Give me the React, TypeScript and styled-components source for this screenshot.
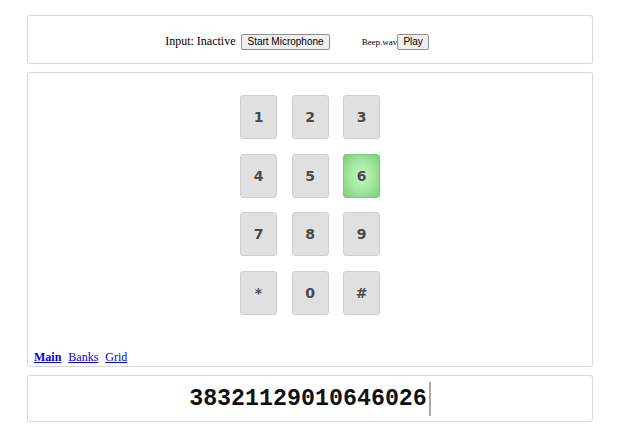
import React from "react";
import styled, { createGlobalStyle } from "styled-components";

const Global = createGlobalStyle`
  html, body { margin: 0; padding: 0; background: #fff; }
  body { font-family: "Liberation Serif", "Times New Roman", serif; }
`;

const Page = styled.div`
  padding: 15px 0 0 27px;
  width: 566px;
  display: flex;
  flex-direction: column;
  gap: 8px;
`;

const Panel = styled.div<{ $h: number }>`
  box-sizing: border-box;
  height: ${(p) => p.$h}px;
  border: 1px solid #d9d9d9;
  border-radius: 3px;
  box-shadow: 0 0 1px rgba(0,0,0,0.08);
  background: #fff;
`;

const TopBar = styled(Panel)`
  display: flex;
  align-items: center;
  justify-content: center;
  padding-right: 26px;
  padding-top: 4px;
`;

const Label = styled.span`
  font-size: 12px;
  color: #000;
  margin-right: 6px;
`;

const SmallLabel = styled.span`
  font-size: 9px;
  color: #000;
  margin-left: 32px;
`;

const NativeBtn = styled.button`
  font-family: "Liberation Sans", Arial, sans-serif;
  font-size: 10px;
  height: 16px;
  padding: 0 5px;
  border: 1px solid #8f8f8f;
  border-radius: 2px;
  background: #efefef;
  color: #000;
  line-height: 12px;
`;

const Main = styled(Panel)`
  display: flex;
  flex-direction: column;
  align-items: center;
  padding-top: 22px;
`;

const Keypad = styled.div`
  display: grid;
  grid-template-columns: repeat(3, 37px);
  grid-auto-rows: 44px;
  column-gap: 14.5px;
  row-gap: 14.7px;
`;

const Key = styled.div<{ $active?: boolean }>`
  box-sizing: border-box;
  display: flex;
  align-items: center;
  justify-content: center;
  border-radius: 3px;
  border: 1px solid ${(p) => (p.$active ? "#7fc97f" : "#cfcfcf")};
  background: ${(p) =>
    p.$active
      ? "radial-gradient(ellipse at center, #c6f7c6 0%, #a6e9a6 45%, #79cf79 100%)"
      : "#e0e0e0"};
  font-family: "DejaVu Sans", sans-serif;
  font-weight: 700;
  font-size: 14px;
  color: #4a4a4a;
`;

const Links = styled.div`
  align-self: flex-start;
  margin-top: auto;
  margin-left: 6px;
  margin-bottom: 1px;
  display: flex;
  gap: 7px;
  font-size: 12px;
`;

const Link = styled.a<{ $bold?: boolean }>`
  color: #0000ee;
  text-decoration: underline;
  font-weight: ${(p) => (p.$bold ? 700 : 400)};
`;

const Display = styled(Panel)`
  display: flex;
  align-items: center;
  justify-content: center;
  padding-left: 0;
`;

const Digits = styled.span`
  font-family: "Liberation Mono", "Courier New", monospace;
  font-weight: 700;
  font-size: 23.3px;
  color: #111;
`;

const Caret = styled.span`
  display: inline-block;
  width: 2px;
  height: 34px;
  background: #aaa;
  margin-left: 2px;
`;

const keys = ["1", "2", "3", "4", "5", "6", "7", "8", "9", "*", "0", "#"];

export default function App() {
  return (
    <>
      <Global />
      <Page>
        <TopBar $h={49}>
          <Label>Input: Inactive</Label>
          <NativeBtn>Start Microphone</NativeBtn>
          <SmallLabel>Beep.wav</SmallLabel>
          <NativeBtn>Play</NativeBtn>
        </TopBar>
        <Main $h={295}>
          <Keypad>
            {keys.map((k) => (
              <Key key={k} $active={k === "6"}>
                {k}
              </Key>
            ))}
          </Keypad>
          <Links>
            <Link $bold href="#">Main</Link>
            <Link href="#">Banks</Link>
            <Link href="#">Grid</Link>
          </Links>
        </Main>
        <Display $h={47}>
          <Digits>38321129010646026</Digits>
          <Caret />
        </Display>
      </Page>
    </>
  );
}
